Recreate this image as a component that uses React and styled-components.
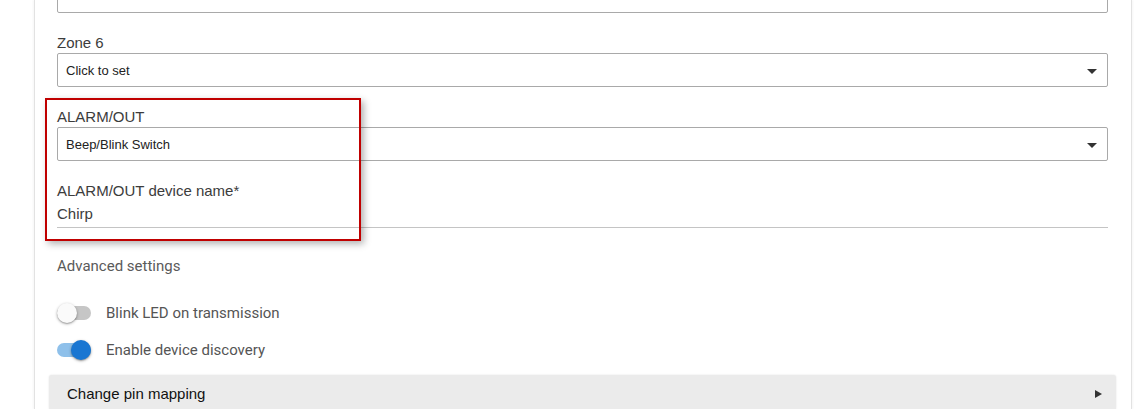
import React from 'react'
import styled, { createGlobalStyle } from 'styled-components'

const GlobalStyle = createGlobalStyle`
  html, body {
    margin: 0;
    padding: 0;
    background: #fff;
    overflow: hidden;
  }
  * { box-sizing: border-box; }
`

const Page = styled.div`
  height: 409px;
  padding-left: 34px;
  width: 1132px;
`

const Card = styled.div`
  height: 100%;
  border-left: 1px solid #e2e2e2;
  border-right: 1px solid #e2e2e2;
  box-shadow: -1px 0 2px rgba(0, 0, 0, 0.04), 1px 0 2px rgba(0, 0, 0, 0.04);
  padding: 0 23px 0 22px;
  display: flex;
  flex-direction: column;
`

const Field = styled.div`
  margin-top: ${p => (p.first ? '-21px' : '21px')};
  display: flex;
  flex-direction: column;
`

const Label = styled.label`
  font-family: "Liberation Sans", Arial, sans-serif;
  font-size: 15px;
  line-height: 18px;
  color: #3c3c3c;
  margin-bottom: 1px;
`

const SelectBox = styled.div`
  height: 34px;
  border: 1px solid #a9a9a9;
  border-radius: 2px;
  display: flex;
  align-items: center;
  justify-content: space-between;
  padding: 0 10px 0 8px;
  font-family: "Liberation Sans", Arial, sans-serif;
  font-size: 13px;
  color: #222;
  background: #fff;
`

const Caret = styled.span`
  width: 0;
  height: 0;
  margin-top: 3px;
  border-left: 5px solid transparent;
  border-right: 5px solid transparent;
  border-top: 5px solid #333;
`

const TextInput = styled.div`
  margin-top: 4px;
  padding-bottom: 4px;
  border-bottom: 1px solid #c4c4c4;
  font-family: "Liberation Sans", Arial, sans-serif;
  font-size: 15px;
  line-height: 18px;
  color: #3c3c3c;
`

const Highlight = styled.div`
  position: relative;
  margin-top: 21px;
  display: flex;
  flex-direction: column;

  & > ${Field}:first-child {
    margin-top: 0;
  }

  &::after {
    content: '';
    position: absolute;
    left: -12px;
    top: -10px;
    width: 312px;
    height: 139px;
    border: 2px solid #c00000;
    box-shadow: 3px 3px 7px rgba(0, 0, 0, 0.3);
    pointer-events: none;
  }
`

const SectionTitle = styled.div`
  margin-top: 28px;
  font-family: Roboto, sans-serif;
  font-size: 15px;
  line-height: 20px;
  color: #5a5a5a;
`

const ToggleList = styled.div`
  margin-top: 27px;
  display: flex;
  flex-direction: column;
  gap: 17px;
`

const ToggleRow = styled.div`
  display: flex;
  align-items: center;
  height: 20px;
  font-family: Roboto, sans-serif;
  font-size: 15px;
  color: #555;
`

const Track = styled.span`
  position: relative;
  width: 34px;
  height: 14px;
  border-radius: 7px;
  background: ${p => (p.on ? '#8ec0ea' : '#c6c6c6')};
  margin-right: 15px;
  flex-shrink: 0;
`

const Thumb = styled.span`
  position: absolute;
  top: -3px;
  left: ${p => (p.on ? '14px' : '0')};
  width: 20px;
  height: 20px;
  border-radius: 50%;
  background: ${p => (p.on ? '#1976d2' : '#fafafa')};
  box-shadow: 0 1px 3px rgba(0, 0, 0, 0.35), 0 1px 1px rgba(0, 0, 0, 0.14);
`

const Panel = styled.div`
  margin: 15px -8px 0 -8px;
  flex: 1;
  background: #ebebeb;
  border-radius: 3px 3px 0 0;
  box-shadow: 0 0 2px rgba(0, 0, 0, 0.12);
  display: flex;
  align-items: flex-start;
  justify-content: space-between;
  padding: 10px 14px 0 18px;
  font-family: "Liberation Sans", Arial, sans-serif;
  font-size: 15px;
  line-height: 18px;
  color: #111;
`

const Arrow = styled.span`
  width: 0;
  height: 0;
  margin-top: 5px;
  border-top: 4.5px solid transparent;
  border-bottom: 4.5px solid transparent;
  border-left: 7px solid #333;
`

const Select = ({ value }) => (
  <SelectBox>
    <span>{value}</span>
    <Caret />
  </SelectBox>
)

const Toggle = ({ on, children }) => (
  <ToggleRow>
    <Track on={on ? 1 : 0}>
      <Thumb on={on ? 1 : 0} />
    </Track>
    {children}
  </ToggleRow>
)

const App = () => {
  return (
    <Page>
      <GlobalStyle />
      <Card>
        <Field first>
          <Select value="" />
        </Field>
        <Field>
          <Label>Zone 6</Label>
          <Select value="Click to set" />
        </Field>
        <Highlight>
          <Field>
            <Label>ALARM/OUT</Label>
            <Select value="Beep/Blink Switch" />
          </Field>
          <Field>
            <Label>ALARM/OUT device name*</Label>
            <TextInput>Chirp</TextInput>
          </Field>
        </Highlight>
        <SectionTitle>Advanced settings</SectionTitle>
        <ToggleList>
          <Toggle>Blink LED on transmission</Toggle>
          <Toggle on>Enable device discovery</Toggle>
        </ToggleList>
        <Panel>
          <span>Change pin mapping</span>
          <Arrow />
        </Panel>
      </Card>
    </Page>
  )
}

export default App
